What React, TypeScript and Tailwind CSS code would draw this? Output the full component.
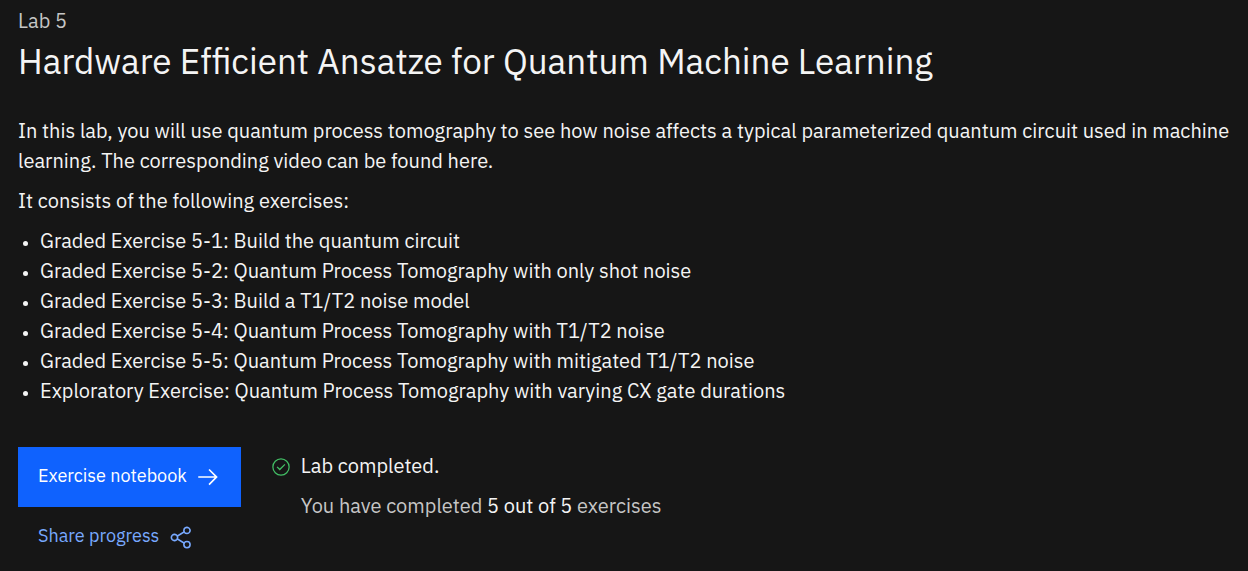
const exercises = [
  "Graded Exercise 5-1: Build the quantum circuit",
  "Graded Exercise 5-2: Quantum Process Tomography with only shot noise",
  "Graded Exercise 5-3: Build a T1/T2 noise model",
  "Graded Exercise 5-4: Quantum Process Tomography with T1/T2 noise",
  "Graded Exercise 5-5: Quantum Process Tomography with mitigated T1/T2 noise",
  "Exploratory Exercise: Quantum Process Tomography with varying CX gate durations",
];

function ArrowRight() {
  return (
    <svg viewBox="0 0 32 32" className="mt-0.5 size-[26px] shrink-0" fill="currentColor" aria-hidden="true">
      <path d="M18 6 16.57 7.393 24.15 15 4 15 4 17 24.15 17 16.57 24.573 18 26 28 16 18 6z" />
    </svg>
  );
}

function ShareIcon() {
  return (
    <svg viewBox="0 0 32 32" className="mt-0.5 size-[25px] shrink-0" fill="currentColor" aria-hidden="true">
      <path d="M23,20a5,5,0,0,0-3.89,1.89L11.8,17.32a4.46,4.46,0,0,0,0-2.64l7.31-4.57A5,5,0,1,0,18,7a4.79,4.79,0,0,0,.2,1.32l-7.31,4.57a5,5,0,1,0,0,6.22l7.31,4.57A4.79,4.79,0,0,0,18,25a5,5,0,1,0,5-5ZM23,4a3,3,0,1,1-3,3A3,3,0,0,1,23,4ZM7,19a3,3,0,1,1,3-3A3,3,0,0,1,7,19Zm16,9a3,3,0,1,1,3-3A3,3,0,0,1,23,28Z" />
    </svg>
  );
}

function CheckmarkOutline() {
  return (
    <svg viewBox="0 0 32 32" className="mt-[10px] size-5 shrink-0 text-[#42be65]" fill="currentColor" aria-hidden="true">
      <path d="M14 21.414 9 16.413 10.413 15 14 18.586 21.585 11 23 12.415 14 21.414z" />
      <path d="M16,2A14,14,0,1,0,30,16,14,14,0,0,0,16,2Zm0,26A12,12,0,1,1,28,16,12,12,0,0,1,16,28Z" />
    </svg>
  );
}

export default function App() {
  return (
    <main className="min-h-screen bg-[#161616] px-[18px] pt-1.5 pb-3 font-['IBM_Plex_Sans','Noto_Sans',sans-serif] text-xl leading-[30px] text-[#f4f4f4]">
      <header>
        <p className="text-[#c6c6c6]">Lab 5</p>
        <h1 className="text-[35px] leading-[50px]">Hardware Efficient Ansatze for Quantum Machine Learning</h1>
      </header>

      <section className="mt-[30px] flex flex-col gap-[10px]">
        <p>
          In this lab, you will use quantum process tomography to see how noise affects a typical parameterized quantum
          circuit used in machine learning. The corresponding video can be found here.
        </p>
        <p>It consists of the following exercises:</p>
        <ul>
          {exercises.map((exercise) => (
            <li key={exercise} className="flex items-center gap-3 pl-[5px]">
              <span className="mt-1 size-[5px] shrink-0 rounded-full bg-current" aria-hidden="true" />
              {exercise}
            </li>
          ))}
        </ul>
      </section>

      <section className="mt-[41px] flex items-start gap-[30px]">
        <div className="flex flex-col text-lg">
          <button type="button" className="flex h-[60px] items-center gap-2 bg-[#0f62fe] px-5 pb-0.5 text-white">
            Exercise notebook
            <ArrowRight />
          </button>
          <button type="button" className="flex h-[60px] items-center gap-2.5 px-5 pb-0.5 text-[#78a9ff]">
            Share progress
            <ShareIcon />
          </button>
        </div>
        <div className="flex gap-[10px]">
          <CheckmarkOutline />
          <div className="flex flex-col gap-[10px] pt-1">
            <p>Lab completed.</p>
            <p className="text-[#c6c6c6]">
              You have completed <span className="text-[#f4f4f4]">5 out of 5</span> exercises
            </p>
          </div>
        </div>
      </section>
    </main>
  );
}
